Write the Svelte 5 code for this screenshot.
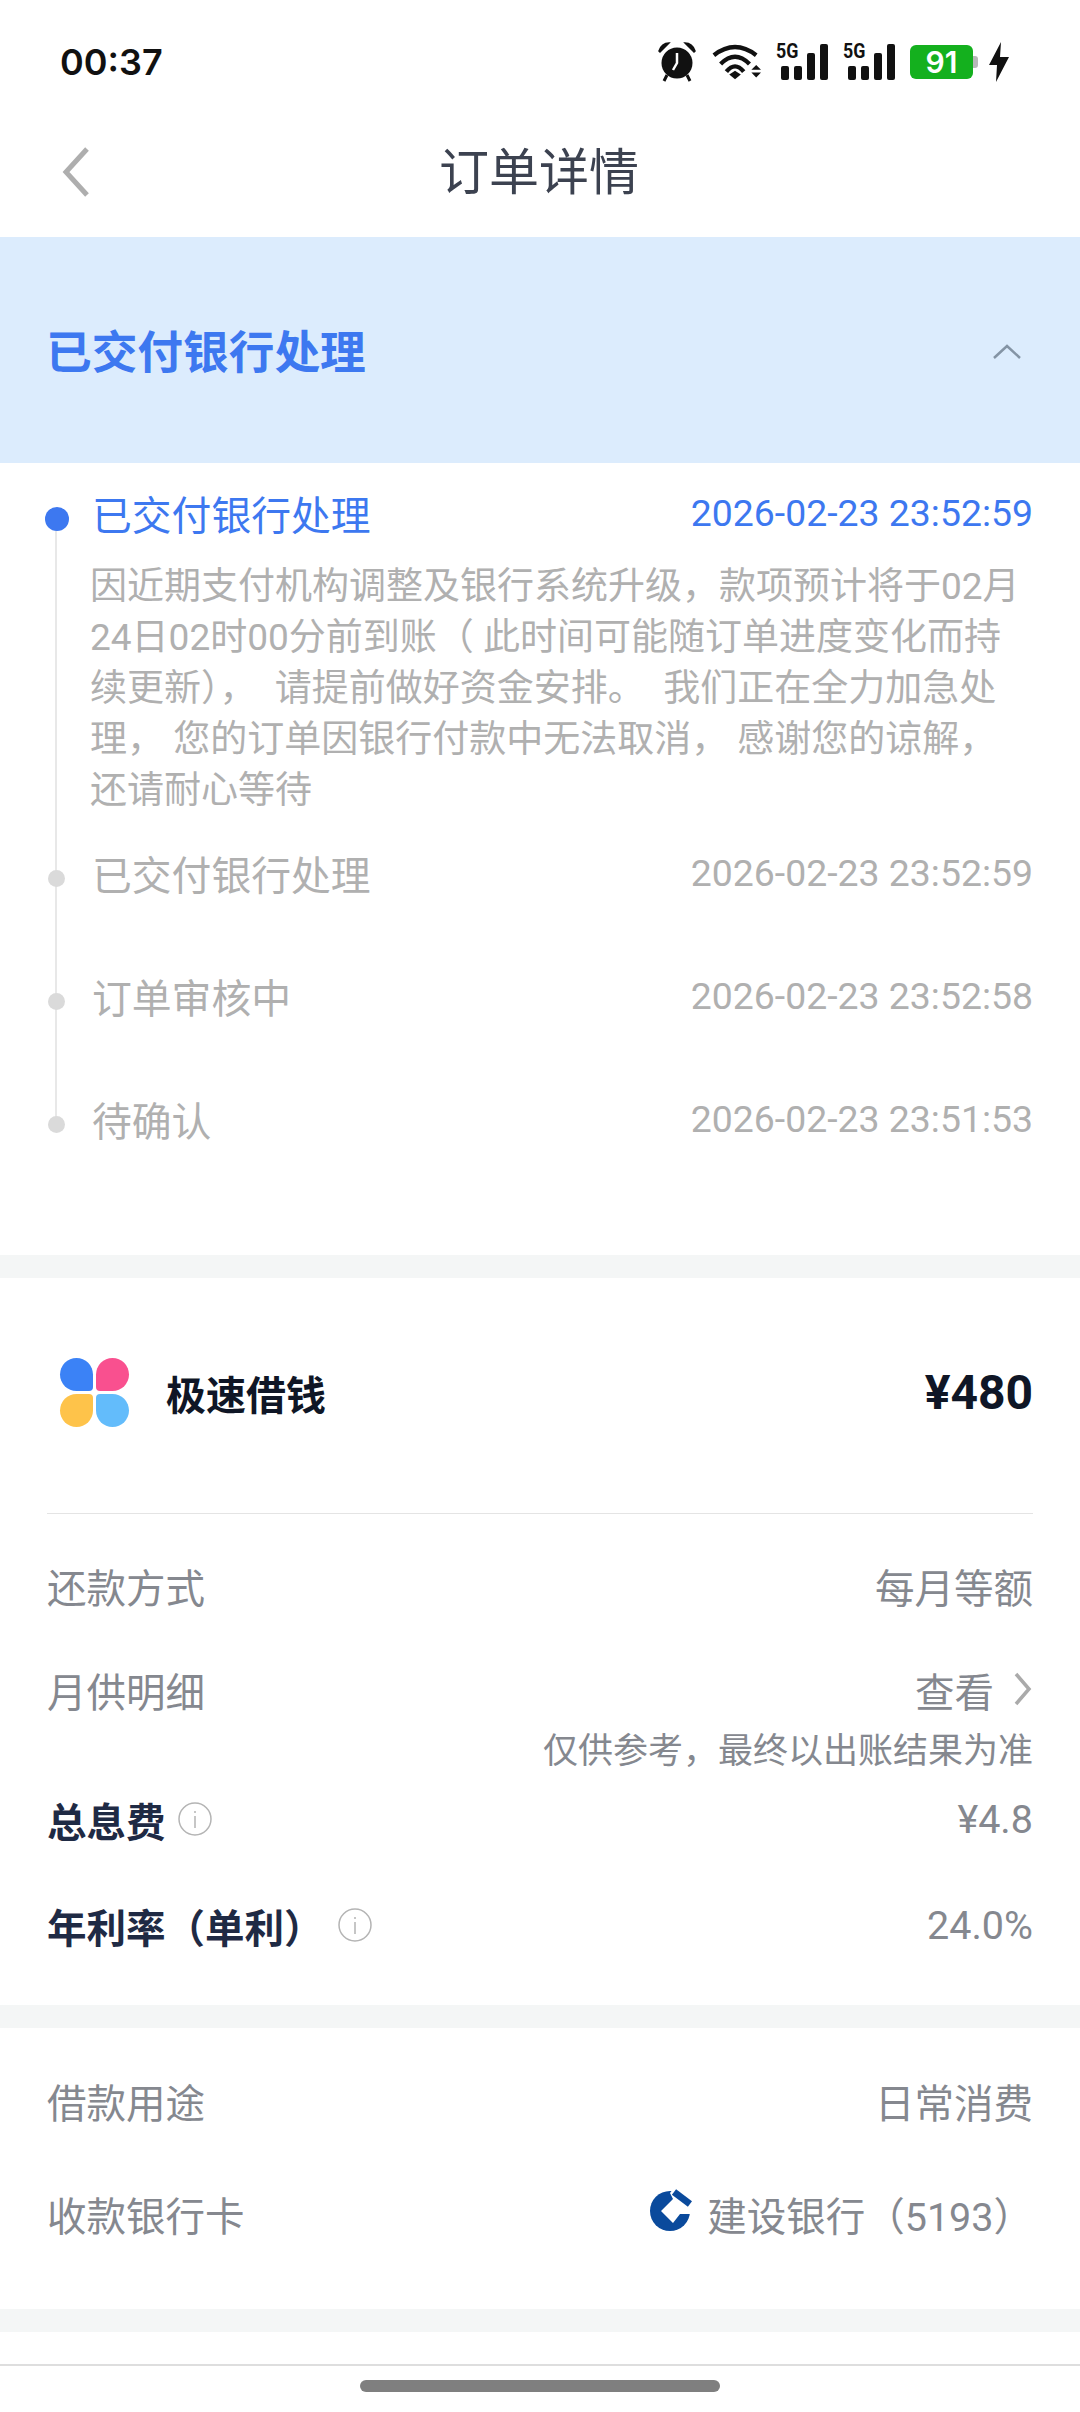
<script>
	const steps = [
		{ title: "已交付银行处理", time: "2026-02-23 23:52:59" },
		{ title: "订单审核中", time: "2026-02-23 23:52:58" },
		{ title: "待确认", time: "2026-02-23 23:51:53" }
	];
</script>

<div class="page">
	<div class="status">
		<span class="clock">00:37</span>
		<div class="icons">
			<svg class="alarm" width="38" height="40" viewBox="0 0 38 40">
				<path d="M1 9 C3 3 7 1 11 1 L2 10Z M37 9 C35 3 31 1 27 1 L36 10Z" fill="#111" stroke="#111" stroke-width="1.5" />
				<circle cx="19" cy="21" r="15.5" fill="#111" />
				<path d="M19 11 V21 L15 28" fill="none" stroke="#fff" stroke-width="2.5" />
				<path d="M9 33 L6 39 M29 33 L32 39" stroke="#111" stroke-width="3" />
			</svg>
			<svg class="wifi" width="50" height="36" viewBox="0 0 52 36">
				<path d="M3 11 Q25 -6 47 11 M10 20 Q25 5 40 20 M16 28 Q25 17 34 28" fill="none" stroke="#111" stroke-width="4.5" />
				<path d="M19 31 L25 27 L31 31 L25 36Z" fill="#111" />
				<path d="M47 21 L52 26 H42Z M47 34 L52 29 H42Z" fill="#111" />
			</svg>
			<div class="signal">
				<span class="net">5G</span>
				<i style="height:14px"></i><i style="height:14px"></i><i style="height:27px"></i><i style="height:36px"></i>
			</div>
			<div class="signal">
				<span class="net">5G</span>
				<i style="height:14px"></i><i style="height:14px"></i><i style="height:27px"></i><i style="height:36px"></i>
			</div>
			<div class="battery"><span>91</span></div>
			<svg class="bolt" width="22" height="40" viewBox="0 0 22 40">
				<path d="M13 0 L1 23 H9 L8 40 L21 15 H12Z" fill="#111" />
			</svg>
		</div>
	</div>

	<header class="nav">
		<svg class="back" width="30" height="52" viewBox="0 0 30 52">
			<path d="M26 3 L5 26 L26 49" fill="none" stroke="#aeaeae" stroke-width="5" />
		</svg>
		<h1>订单详情</h1>
	</header>

	<div class="banner">
		<span>已交付银行处理</span>
		<svg width="30" height="18" viewBox="0 0 30 18">
			<path d="M2 15 L15 3 L28 15" fill="none" stroke="#8494a5" stroke-width="2.5" />
		</svg>
	</div>

	<section class="timeline">
		<div class="line"></div>
		<div class="step active">
			<span class="dot"></span>
			<span class="name">已交付银行处理</span>
			<span class="time">2026-02-23 23:52:59</span>
		</div>
		<p class="note">因近期支付机构调整及银行系统升级，款项预计将于02月24日02时00分前到账（ 此时间可能随订单进度变化而持续更新）， &nbsp;请提前做好资金安排。 &nbsp;我们正在全力加急处理， 您的订单因银行付款中无法取消， 感谢您的谅解，还请耐心等待</p>
		{#each steps as s}
			<div class="step">
				<span class="dot"></span>
				<span class="name">{s.title}</span>
				<span class="time">{s.time}</span>
			</div>
		{/each}
	</section>

	<div class="gap"></div>

	<section class="product">
		<div class="logo">
			<i class="blue"></i><i class="pink"></i><i class="yellow"></i><i class="sky"></i>
		</div>
		<span class="pname">极速借钱</span>
		<span class="amount">¥480</span>
	</section>

	<section class="details">
		<div class="row"><span>还款方式</span><span>每月等额</span></div>
		<div class="row two">
			<span>月供明细</span>
			<span class="more">查看
				<svg width="20" height="34" viewBox="0 0 20 34">
					<path d="M3 2 L16 17 L3 32" fill="none" stroke="#aaa" stroke-width="3.500" />
				</svg>
			</span>
		</div>
		<div class="hint">仅供参考，最终以出账结果为准</div>
		<div class="row three">
			<span class="strong">总息费
				<svg class="info" width="34" height="34" viewBox="0 0 34 34">
					<circle cx="17" cy="17" r="16" fill="none" stroke="#b4b4b4" stroke-width="1.500" />
					<path d="M17 9 V11 M17 14 V26" stroke="#b4b4b4" stroke-width="1.500" />
				</svg>
			</span>
			<span>¥4.8</span>
		</div>
		<div class="row four">
			<span class="strong">年利率（单利）
				<svg class="info" width="34" height="34" viewBox="0 0 34 34">
					<circle cx="17" cy="17" r="16" fill="none" stroke="#b4b4b4" stroke-width="1.500" />
					<path d="M17 9 V11 M17 14 V26" stroke="#b4b4b4" stroke-width="1.500" />
				</svg>
			</span>
			<span>24.0%</span>
		</div>
	</section>

	<div class="gap"></div>

	<section class="loan">
		<div class="row"><span>借款用途</span><span>日常消费</span></div>
		<div class="row six">
			<span>收款银行卡</span>
			<span class="bank">
				<svg width="42" height="44" viewBox="0 0 42 44">
					<circle cx="20" cy="22" r="20" fill="#0a4a9c" />
					<path d="M23 10 L11 22 L23 34 L30 25 H42 V12 L24 -1 L20 4Z" fill="#fff" />
					<path d="M24 3 L40 15" fill="none" stroke="#0a4a9c" stroke-width="7" />
				</svg>
				<span>建设银行（5193）</span>
			</span>
		</div>
	</section>

	<div class="gap"></div>

	<div class="home"><span></span></div>
</div>

<style>
	:global(body) {
		margin: 0;
		background: #fff;
	}

	.page {
		width: 1080px;
		height: 2412px;
		overflow: hidden;
		font-family: Roboto, "Noto Sans CJK SC", sans-serif;
		background: #fff;
	}

	.status {
		height: 120px;
		display: flex;
		justify-content: space-between;
		align-items: center;
		padding: 3px 70px 0 60px;
		box-sizing: border-box;
	}

	.clock {
		font-family: Inter, sans-serif;
		font-weight: 600;
		font-size: 36px;
		color: #111;
	}

	.icons {
		display: flex;
		align-items: center;
		gap: 15px;
	}

	.signal {
		position: relative;
		width: 52px;
		height: 37px;
		display: flex;
		align-items: flex-end;
		justify-content: flex-end;
		gap: 5px;
	}

	.signal i {
		width: 8px;
		border-radius: 2px;
		background: #111;
	}

	.net {
		position: absolute;
		left: 0;
		top: -2px;
		font-family: Roboto, sans-serif;
		font-size: 21px;
		font-weight: 700;
		line-height: 21px;
		color: #111;
		transform: scaleX(0.85);
		transform-origin: left;
	}

	.battery {
		position: relative;
		width: 63px;
		height: 34px;
		border-radius: 6px;
		background: #14b01e;
		display: flex;
		align-items: center;
		justify-content: center;
	}

	.battery::after {
		content: "";
		position: absolute;
		right: -5px;
		top: 11px;
		width: 5px;
		height: 12px;
		border-radius: 0 3px 3px 0;
		background: #b8b8b8;
	}

	.battery span {
		font-family: Inter, sans-serif;
		font-weight: 600;
		font-size: 30px;
		color: #fff;
	}

	.nav {
		position: relative;
		height: 117px;
		display: flex;
		align-items: center;
		justify-content: center;
	}

	.back {
		position: absolute;
		left: 61px;
		top: 26px;
	}

	h1 {
		margin: 0 2px 21px 0;
		font-size: 50px;
		font-weight: 400;
		color: #3c4250;
	}

	.banner {
		height: 226px;
		background: #dcecfd;
		display: flex;
		align-items: center;
		justify-content: space-between;
		padding: 0 58px 0 46px;
	}

	.banner span {
		font-size: 45.7px;
		font-weight: 700;
		color: #3d78f0;
		margin-bottom: 2px;
	}

	.banner svg {
		margin-top: 3px;
	}

	.timeline {
		position: relative;
		padding: 22px 47px 0 0;
		height: 792px;
		box-sizing: border-box;
	}

	.line {
		position: absolute;
		left: 55px;
		top: 60px;
		width: 2px;
		height: 605px;
		background: #e8e8e8;
	}

	.step {
		position: relative;
		height: 60px;
		display: flex;
		justify-content: space-between;
		align-items: center;
		padding-left: 92px;
		color: #b0b0b0;
		margin-bottom: 63px;
	}

	.name {
		font-size: 39.8px;
		margin-bottom: 4px;
	}

	.time {
		font-size: 37.4px;
		margin-bottom: 3px;
	}

	.dot {
		position: absolute;
		left: 48px;
		top: 26px;
		width: 17px;
		height: 17px;
		border-radius: 50%;
		background: #dadada;
	}

	.active {
		color: #3d78f0;
		margin-bottom: 0;
	}

	.active .name {
		margin-bottom: 6px;
	}

	.active .time {
		margin-bottom: 5px;
	}

	.active .dot {
		left: 45px;
		top: 22px;
		width: 24px;
		height: 24px;
		background: #3d78f0;
	}

	.note {
		margin: 16px 0 28px 90px;
		font-size: 37px;
		line-height: 51px;
		color: #b0b0b0;
	}

	.gap {
		height: 23px;
		background: #f4f6f6;
	}

	.product {
		height: 236px;
		margin: 0 47px;
		display: flex;
		align-items: center;
		border-bottom: 1px solid #e4e4e4;
		box-sizing: border-box;
		padding-bottom: 6px;
	}

	.logo {
		display: grid;
		grid-template-columns: 33px 33px;
		gap: 3px;
		margin-left: 13px;
	}

	.logo i {
		width: 33px;
		height: 33px;
		display: block;
	}

	.blue {
		background: #3b82f6;
		border-radius: 50% 50% 4px 50%;
	}

	.pink {
		background: #f9508f;
		border-radius: 50% 50% 50% 4px;
	}

	.yellow {
		background: #fec34a;
		border-radius: 50% 4px 50% 50%;
	}

	.sky {
		background: #63bcfb;
		border-radius: 4px 50% 50% 50%;
	}

	.pname {
		margin-left: 37px;
		font-size: 40px;
		font-weight: 700;
		color: #0f1626;
	}

	.amount {
		margin-left: auto;
		font-size: 48px;
		font-weight: 700;
		color: #0f1626;
	}

	.details {
		height: 491px;
		padding: 41px 47px 0;
		box-sizing: border-box;
	}

	.row {
		display: flex;
		justify-content: space-between;
		align-items: center;
		height: 60px;
		font-size: 39.5px;
		color: #85888f;
	}

	.two {
		margin-top: 44px;
	}

	.hint {
		margin-top: 10px;
		height: 46px;
		line-height: 46px;
		text-align: right;
		font-size: 35px;
		color: #85888f;
	}

	.three {
		margin-top: 14px;
	}

	.four {
		margin-top: 46px;
	}

	.more,
	.strong,
	.bank {
		display: flex;
		align-items: center;
	}

	.more svg {
		margin-left: 19px;
	}

	.strong {
		font-weight: 700;
		color: #1f2a44;
	}

	.info {
		margin-left: 12px;
	}

	.four .info {
		margin-left: 14px;
	}

	.loan {
		height: 281px;
		padding: 42px 47px 0;
		box-sizing: border-box;
	}

	.six {
		margin-top: 53px;
	}

	.bank svg {
		margin: 0 15px 4px 0;
	}

	.home {
		height: 49px;
		margin-top: 32px;
		border-top: 2px solid #dedede;
		box-sizing: border-box;
		display: flex;
		justify-content: center;
		padding-top: 14px;
	}

	.home span {
		width: 360px;
		height: 12px;
		border-radius: 6px;
		background: #7f7f7f;
	}
</style>
